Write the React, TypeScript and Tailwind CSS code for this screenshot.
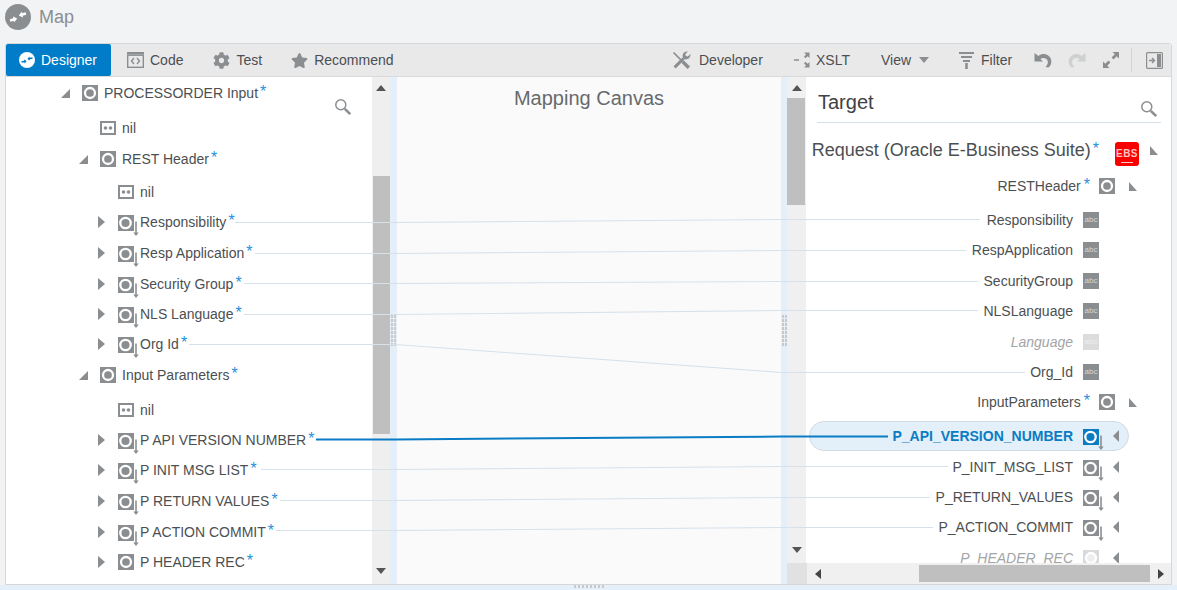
import { FaCog, FaStar } from 'react-icons/fa'

const GRAY = '#8b8e91'

function ObjectIcon({ active = false, faded = false }: { active?: boolean; faded?: boolean }) {
  const fill = active ? '#0a7cc4' : faded ? '#d9dadb' : GRAY
  return (
    <svg width="16" height="16" viewBox="0 0 16 16" className="shrink-0">
      <rect width="16" height="16" fill={fill} />
      <circle cx="8" cy="8" r="5" fill={faded ? '#eeeeee' : fill} stroke="#fff" strokeWidth="2.3" />
    </svg>
  )
}

function RefIcon({ active = false }: { active?: boolean }) {
  const fill = active ? '#0a7cc4' : GRAY
  return (
    <svg width="22" height="22" viewBox="0 0 22 22" className="shrink-0 mt-[8px]">
      <rect width="16" height="16" fill={fill} />
      <circle cx="7.5" cy="8" r="5.2" fill={fill} stroke="#fff" strokeWidth="2.3" />
      <path d="M18 6.5V19" stroke={GRAY} strokeWidth="1.6" />
      <path d="M15.3 17.5H20.7L18 21Z" fill={GRAY} />
    </svg>
  )
}

function NilIcon() {
  return (
    <svg width="16" height="16" viewBox="0 0 16 16" className="shrink-0">
      <rect x="1" y="2" width="14" height="12" fill="#fff" stroke={GRAY} strokeWidth="2" />
      <circle cx="5.5" cy="8" r="1.8" fill={GRAY} />
      <circle cx="10.5" cy="8" r="1.8" fill={GRAY} />
    </svg>
  )
}

function AbcIcon({ faded = false }: { faded?: boolean }) {
  return (
    <div
      className={`w-4 h-4 shrink-0 flex items-center justify-center text-[8px] leading-none ${
        faded ? 'bg-[#dcdcdc] text-[#eeeeee]' : 'bg-[#8b8e91] text-[#d5d6d7]'
      }`}
    >
      abc
    </div>
  )
}

function EbsIcon() {
  return (
    <div className="w-6 h-6 mt-[7px] shrink-0 rounded-[3px] bg-[#f90000] flex flex-col items-center pt-[7px]">
      <span className="text-[10px] leading-[10px] font-bold tracking-[0.5px] text-[#ffc4c4]">EBS</span>
      <span className="mt-[3px] w-[12px] h-px bg-[#ffc4c4]" />
    </div>
  )
}

function TriOpenLeft() {
  return (
    <svg width="9" height="9" viewBox="0 0 9 9" className="shrink-0">
      <path d="M9 0V9H0Z" fill={GRAY} />
    </svg>
  )
}

function TriOpenRight() {
  return (
    <svg width="8" height="9" viewBox="0 0 8 9" className="shrink-0">
      <path d="M0 0V9H8Z" fill={GRAY} />
    </svg>
  )
}

function TriClosedRight() {
  return (
    <svg width="7" height="12" viewBox="0 0 7 12" className="shrink-0">
      <path d="M0 0L7 6L0 12Z" fill={GRAY} />
    </svg>
  )
}

function TriClosedLeft() {
  return (
    <svg width="6" height="12" viewBox="0 0 6 12" className="shrink-0">
      <path d="M6 0L0 6L6 12Z" fill={GRAY} />
    </svg>
  )
}

function Star() {
  return <span className="text-[#1f8fdb] text-[16px] leading-none ml-[2px] -translate-y-[1px]">*</span>
}

function SearchIcon() {
  return (
    <svg width="18" height="18" viewBox="0 0 18 18" fill="none" className="shrink-0">
      <circle cx="6.8" cy="6.8" r="5" stroke={GRAY} strokeWidth="1.5" />
      <path d="M10.8 10.8L16.2 16.2" stroke={GRAY} strokeWidth="2.6" />
    </svg>
  )
}

function UndoGlyph({ color, flip = false }: { color: string; flip?: boolean }) {
  return (
    <svg width="18" height="16" viewBox="0 0 18 16" className={flip ? '-scale-x-100' : ''}>
      <path
        d="M0.5 1V9.5H9L6.4 6.9C9 5.2 12.6 5.8 13.6 8.8C14.3 11 13.4 13.3 11.4 15.2H15C17.6 12.6 18.3 8.4 15.8 5.1C13 1.5 8 1.2 4.4 3.9L0.5 1Z"
        fill={color}
      />
    </svg>
  )
}

function Dots({ className, count }: { className: string; count: number }) {
  return (
    <div className={className}>
      {Array.from({ length: count }).map((_, i) => (
        <span key={i} className="block w-[2px] h-[3px] bg-[#c9c9c9]" />
      ))}
    </div>
  )
}

function ArrowUp() {
  return (
    <svg width="10" height="6" viewBox="0 0 10 6">
      <path d="M0 6L5 0L10 6Z" fill="#555" />
    </svg>
  )
}

function ArrowDown() {
  return (
    <svg width="10" height="6" viewBox="0 0 10 6">
      <path d="M0 0L5 6L10 0Z" fill="#555" />
    </svg>
  )
}

function SourceGroup({ label, indent, gap }: { label: string; indent: string; gap: string }) {
  return (
    <div className={`flex items-center h-[30px] ${indent} ${gap}`}>
      <TriOpenLeft />
      <span className="ml-[12px]">
        <ObjectIcon />
      </span>
      <span className="ml-[6px]">{label}</span>
      <Star />
    </div>
  )
}

function SourceNil({ indent, gap }: { indent: string; gap: string }) {
  return (
    <div className={`flex items-center h-[30px] ${indent} ${gap}`}>
      <NilIcon />
      <span className="ml-[6px]">nil</span>
    </div>
  )
}

function SourceRef({ label, gap, plain = false }: { label: string; gap: string; plain?: boolean }) {
  return (
    <div className={`flex items-center h-[30px] pl-[92px] ${gap}`}>
      <TriClosedRight />
      <span className="ml-[13px] w-[22px] flex items-center">
        {plain ? <ObjectIcon /> : <RefIcon />}
      </span>
      <span>{label}</span>
      <Star />
    </div>
  )
}

function TargetLeaf({ label, gap, faded = false }: { label: string; gap: string; faded?: boolean }) {
  return (
    <div className={`flex items-center justify-end h-[30px] pr-[72px] ${gap}`}>
      <span className={faded ? 'italic text-[#a3a5a7]' : ''}>{label}</span>
      <span className="ml-[10px]">
        <AbcIcon faded={faded} />
      </span>
    </div>
  )
}

function TargetGroup({ label, gap }: { label: string; gap: string }) {
  return (
    <div className={`flex items-center justify-end h-[30px] pr-[34px] ${gap}`}>
      <span className="mr-px">{label}</span>
      <Star />
      <span className="ml-[9px]">
        <ObjectIcon />
      </span>
      <span className="ml-[14px]">
        <TriOpenRight />
      </span>
    </div>
  )
}

function TargetRef({ label, gap, faded = false }: { label: string; gap: string; faded?: boolean }) {
  return (
    <div className={`flex items-center justify-end h-[30px] pr-[52px] ${gap}`}>
      <span className={faded ? 'italic text-[#a3a5a7]' : ''}>{label}</span>
      <span className="ml-[10px] w-[22px] flex items-center">
        {faded ? <ObjectIcon faded /> : <RefIcon />}
      </span>
      <span className="ml-[8px]">
        <TriClosedLeft />
      </span>
    </div>
  )
}

const lines = [
  'M235 222.5H395L782 219.5H980',
  'M255 253.5H395L782 250.5H966',
  'M244 283.5H395L782 281.5H978',
  'M244 314.5H395L782 310.5H978',
  'M189 344.5H395L782 372.5H1025',
  'M261 469.5H395L782 466.5H948',
  'M280 500.5H395L782 497.5H930',
  'M276 530.5H395L782 527.5H933',
]

export default function App() {
  return (
    <div className="relative h-[590px] w-full overflow-hidden flex flex-col bg-[#f2f3f5] font-['Liberation_Sans',Arial,sans-serif] text-[14px] text-[#4c4f52]">
      <div className="h-[43px] shrink-0 flex items-start pl-[5px] pt-[4px]">
        <svg width="26" height="26" viewBox="0 0 26 26">
          <circle cx="13" cy="13" r="13" fill={GRAY} />
          <path d="M5 16.5L10.5 15" stroke="#fff" strokeWidth="2.4" />
          <path d="M12.2 14.6L8 12.4L9 18.4Z" fill="#fff" />
          <path d="M21 9.5L15.5 11" stroke="#fff" strokeWidth="2.4" />
          <path d="M13.8 11.4L18 13.6L17 7.6Z" fill="#fff" />
        </svg>
        <span className="ml-[8px] text-[18px] leading-[26px] text-[#8b8e91]">Map</span>
      </div>

      <div className="flex-1 min-h-0 mx-[5px] flex flex-col bg-white border border-[#d6d7d9] rounded-t-[3px]">
        <div className="h-[33px] shrink-0 flex items-center bg-[#e9e9e9] border-b border-[#dadada]">
          <div className="w-[105px] h-full flex items-center pl-[13px] bg-[#007cc8] rounded-[2px] text-white">
            <svg width="16" height="16" viewBox="0 0 16 16">
              <circle cx="8" cy="8" r="8" fill="#fff" />
              <path d="M2.5 10L6.5 9.2" stroke="#007cc8" strokeWidth="1.5" />
              <path d="M7.6 9L5 7.4L5.6 11.4Z" fill="#007cc8" />
              <path d="M13.5 6L9.5 6.8" stroke="#007cc8" strokeWidth="1.5" />
              <path d="M8.4 7L11 8.6L10.4 4.6Z" fill="#007cc8" />
            </svg>
            <span className="ml-[6px]">Designer</span>
          </div>
          <div className="ml-[16px] flex items-center">
            <svg width="17" height="16" viewBox="0 0 17 16" fill="none">
              <path d="M0 0H17V2.5H0Z" fill={GRAY} />
              <rect x="0.7" y="3.2" width="15.6" height="12.1" stroke={GRAY} strokeWidth="1.4" />
              <path d="M7 6L4.5 9L7 12M10 6L12.5 9L10 12" stroke={GRAY} strokeWidth="1.4" />
            </svg>
            <span className="ml-[6px]">Code</span>
          </div>
          <div className="ml-[30px] flex items-center">
            <FaCog size={17} color={GRAY} />
            <span className="ml-[6px]">Test</span>
          </div>
          <div className="ml-[29px] flex items-center">
            <FaStar size={17} color={GRAY} />
            <span className="ml-[6px]">Recommend</span>
          </div>

          <div className="ml-auto pr-[8px] flex items-center">
            <div className="w-[122px] flex items-center">
              <svg width="19" height="19" viewBox="0 0 19 19" fill="none">
                <path d="M1.5 1.5L9 9" stroke={GRAY} strokeWidth="1.7" />
                <path d="M10.5 10.5L16.8 16.8" stroke={GRAY} strokeWidth="3.4" />
                <path d="M2.6 16.4L11.5 7.5" stroke={GRAY} strokeWidth="3" />
                <path
                  d="M18.4 3L15.8 5.4L13.8 5L13.4 3L15.9 0.6C13.4 -0.2 10.4 1.8 10.6 5C10.7 6.6 11.2 7.4 12 8C14.6 9.4 19 7.4 18.4 3Z"
                  fill={GRAY}
                />
              </svg>
              <span className="ml-[8px]">Developer</span>
            </div>
            <div className="w-[87px] flex items-center">
              <svg width="17" height="18" viewBox="0 0 17 18" fill="none">
                <path d="M0 9H5" stroke={GRAY} strokeWidth="1.5" />
                <path d="M10 1.5H15.5V7L13.6 5.2L11.5 7.2L10 5.8L12 3.4Z" fill={GRAY} />
                <path d="M10 16.5H15.5V11L13.6 12.8L11.5 10.8L10 12.2L12 14.6Z" fill={GRAY} />
              </svg>
              <span className="ml-[5px]">XSLT</span>
            </div>
            <div className="w-[78px] flex items-center">
              <span>View</span>
              <svg width="10" height="6" viewBox="0 0 10 6" className="ml-[8px]">
                <path d="M0 0H10L5 6Z" fill={GRAY} />
              </svg>
            </div>
            <div className="w-[75px] flex items-center">
              <svg width="15" height="18" viewBox="0 0 15 18">
                <path d="M0 1H15V3H0ZM2 5H13V7H2ZM4 9H11V11H4ZM6.2 12H8.8V18H6.2Z" fill={GRAY} />
              </svg>
              <span className="ml-[7px]">Filter</span>
            </div>
            <div className="w-[34px] flex items-center">
              <UndoGlyph color={GRAY} />
            </div>
            <div className="w-[34px] flex items-center">
              <UndoGlyph color="#cfd0d1" flip />
            </div>
            <div className="w-[29px] flex items-center">
              <svg width="18" height="18" viewBox="0 0 18 18">
                <path d="M10.5 1H17V7.5L14.7 5.2L11.5 8.4L9.6 6.5L12.8 3.3Z" fill={GRAY} />
                <path d="M1 10.5V17H7.5L5.2 14.7L8.4 11.5L6.5 9.6L3.3 12.8Z" fill={GRAY} />
              </svg>
            </div>
            <div className="w-px h-[24px] bg-[#d3d3d3]" />
            <div className="ml-[14px] flex items-center">
              <svg width="17" height="17" viewBox="0 0 17 17" fill="none">
                <rect x="0.6" y="0.6" width="15.8" height="15.8" rx="1" stroke={GRAY} strokeWidth="1.2" />
                <path d="M11 2H15V15H11Z" fill={GRAY} />
                <path d="M3 8.5H8M6 6L8.5 8.5L6 11" stroke={GRAY} strokeWidth="1.4" />
              </svg>
            </div>
          </div>
        </div>

        <div className="flex-1 min-h-0 flex">
          <div className="relative w-[366px] shrink-0 overflow-hidden pt-px">
            <div className="absolute left-[328px] top-[21px]">
              <SearchIcon />
            </div>
            <SourceGroup label="PROCESSORDER Input" indent="pl-[55px]" gap="" />
            <SourceNil indent="pl-[94px]" gap="mt-[5px]" />
            <SourceGroup label="REST Header" indent="pl-[73px]" gap="mt-px" />
            <SourceNil indent="pl-[112px]" gap="mt-[3px]" />
            <SourceRef label="Responsibility" gap="" />
            <SourceRef label="Resp Application" gap="mt-px" />
            <SourceRef label="Security Group" gap="mt-px" />
            <SourceRef label="NLS Language" gap="" />
            <SourceRef label="Org Id" gap="" />
            <SourceGroup label="Input Parameters" indent="pl-[73px]" gap="mt-px" />
            <SourceNil indent="pl-[112px]" gap="mt-[5px]" />
            <SourceRef label="P API VERSION NUMBER" gap="" />
            <SourceRef label="P INIT MSG LIST" gap="" />
            <SourceRef label="P RETURN VALUES" gap="mt-px" />
            <SourceRef label="P ACTION COMMIT" gap="mt-px" />
            <SourceRef label="P HEADER REC" gap="" plain />
          </div>

          <div className="w-[18px] shrink-0 flex flex-col items-center bg-[#efefef]">
            <div className="h-[99px] w-full flex justify-center pt-[8px]">
              <ArrowUp />
            </div>
            <div className="h-[258px] w-[17px] ml-px bg-[#bfbfbf]" />
            <div className="flex-1 flex items-end pb-[10px]">
              <ArrowDown />
            </div>
          </div>

          <div className="w-[7px] shrink-0 bg-[#e4eff9] flex items-center justify-center">
            <Dots className="grid grid-cols-2 gap-x-px gap-y-px" count={16} />
          </div>

          <div className="w-[384px] shrink-0 bg-[#fafafa] text-center text-[20px] leading-[24px] text-[#666a6d] pt-[9px]">
            Mapping Canvas
          </div>

          <div className="w-[6px] shrink-0 bg-[#e4eff9] flex items-center justify-center">
            <Dots className="grid grid-cols-2 gap-x-px gap-y-px" count={16} />
          </div>

          <div className="flex-1 min-w-0 flex flex-col">
            <div className="flex-1 min-h-0 flex">
              <div className="w-[19px] shrink-0 flex flex-col items-center bg-[#f0f0f0]">
                <div className="h-[21px] w-full flex justify-center pt-[8px]">
                  <ArrowUp />
                </div>
                <div className="h-[107px] w-[18px] mr-px bg-[#bfbfbf]" />
                <div className="flex-1 flex items-end pb-[10px]">
                  <ArrowDown />
                </div>
              </div>
              <div className="flex-1 min-w-0 overflow-hidden">
                <div className="h-[46px] ml-[11px] mr-[10px] pb-[8px] flex items-end justify-between border-b border-[#d5e0e8] text-[20px] leading-[24px] text-[#3f4245]">
                  <span className="ml-px">Target</span>
                  <span className="mr-[3px] -mb-[4px]">
                    <SearchIcon />
                  </span>
                </div>
                <div className="mt-[12px] flex items-center justify-end h-[30px] pr-[13px]">
                  <span className="text-[18px]">Request (Oracle E-Business Suite)</span>
                  <Star />
                  <span className="ml-[16px]">
                    <EbsIcon />
                  </span>
                  <span className="ml-[11px]">
                    <TriOpenRight />
                  </span>
                </div>
                <TargetGroup label="RESTHeader" gap="mt-[6px]" />
                <TargetLeaf label="Responsibility" gap="mt-[4px]" />
                <TargetLeaf label="RespApplication" gap="" />
                <TargetLeaf label="SecurityGroup" gap="mt-px" />
                <TargetLeaf label="NLSLanguage" gap="" />
                <TargetLeaf label="Language" gap="mt-px" faded />
                <TargetLeaf label="Org_Id" gap="" />
                <TargetGroup label="InputParameters" gap="" />
                <div className="mt-[4px] h-[30px] ml-[3px] w-[320px] pr-[9px] flex items-center justify-end rounded-full bg-[#e3eff9] border border-[#d3dbe2] font-bold text-[#0a7cc4]">
                  <span>P_API_VERSION_NUMBER</span>
                  <span className="ml-[10px] w-[22px] flex items-center">
                    <RefIcon active />
                  </span>
                  <span className="ml-[8px]">
                    <TriClosedLeft />
                  </span>
                </div>
                <TargetRef label="P_INIT_MSG_LIST" gap="mt-px" />
                <TargetRef label="P_RETURN_VALUES" gap="" />
                <TargetRef label="P_ACTION_COMMIT" gap="" />
                <TargetRef label="P_HEADER_REC" gap="mt-px" faded />
              </div>
            </div>
            <div className="h-[21px] shrink-0 flex items-center bg-[#f0f0f0]">
              <div className="w-[20px] h-full bg-[#e1e1e1]" />
              <div className="w-[20px] flex justify-center ml-[1px]">
                <svg width="6" height="10" viewBox="0 0 6 10">
                  <path d="M6 0L0 5L6 10Z" fill="#444" />
                </svg>
              </div>
              <div className="w-[231px] h-[17px] ml-[91px] bg-[#bfbfbf]" />
              <div className="flex-1 flex justify-center">
                <svg width="6" height="10" viewBox="0 0 6 10">
                  <path d="M0 0L6 5L0 10Z" fill="#444" />
                </svg>
              </div>
            </div>
          </div>
        </div>
      </div>

      <div className="h-[5px] shrink-0 bg-[#e4eff9] flex justify-center">
        <Dots className="flex gap-[2px] overflow-hidden" count={8} />
      </div>

      <svg width="1177" height="590" viewBox="0 0 1177 590" fill="none" className="absolute left-0 top-0 pointer-events-none">
        {lines.map((d) => (
          <path key={d} d={d} stroke="#d6e1ea" strokeWidth="1" />
        ))}
        <path d="M316 439.5H395L782 436.5H888" stroke="#0a7cc4" strokeWidth="2" />
      </svg>
    </div>
  )
}
